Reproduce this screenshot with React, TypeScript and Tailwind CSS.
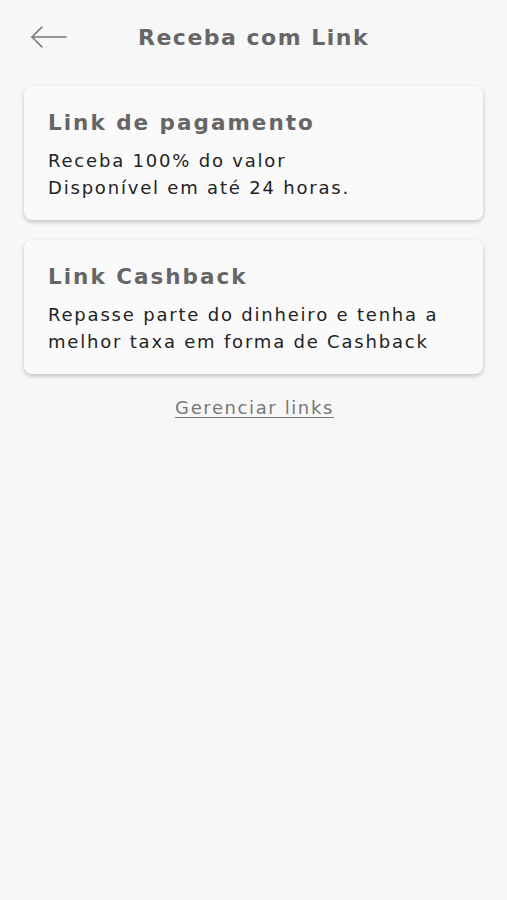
import React from "react";

const cards = [
  {
    title: "Link de pagamento",
    lines: ["Receba 100% do valor", "Disponível em até 24 horas."],
  },
  {
    title: "Link Cashback",
    lines: ["Repasse parte do dinheiro e tenha a", "melhor taxa em forma de Cashback"],
  },
];

const App = () => {
  return (
    <div
      className="min-h-[900px] w-full bg-[#f7f7f7]"
      style={{ fontFamily: '"DejaVu Sans", "Noto Sans", sans-serif' }}
    >
      {/* Header */}
      <header className="flex items-center h-[74px] px-[30px]">
        <button className="w-[38px] h-[24px] flex items-center text-[#777]">
          <svg width="38" height="24" viewBox="0 0 38 24" fill="none" stroke="currentColor" strokeWidth="1.6" strokeLinecap="round" strokeLinejoin="round">
            <path d="M36 12H2" />
            <path d="M12 2L2 12l10 10" />
          </svg>
        </button>
        <h1 className="ml-[70px] text-[22px] font-bold text-[#666] tracking-[1.5px] leading-[30px] pt-[2px]">Receba com Link</h1>
      </header>

      {/* Cards */}
      <main className="px-[24px] pt-[12px] flex flex-col gap-[20px]">
        {cards.map((card) => (
          <div
            key={card.title}
            className="bg-[#fafafa] rounded-[8px] shadow-[0_2px_4px_rgba(0,0,0,0.22)] px-[24px] pt-[22px] pb-[22px] h-[134px]"
          >
            <h2 className="text-[21.5px] font-bold text-[#666] leading-[30px] tracking-[2px]">{card.title}</h2>
            <div className="mt-[9px] text-[18px] text-[#222] leading-[27px] tracking-[1.8px]">
              {card.lines.map((l) => (
                <p key={l}>{l}</p>
              ))}
            </div>
          </div>
        ))}
      </main>

      <div className="flex justify-center mt-[20px] pl-[2px]">
        <a className="text-[18px] text-[#777] tracking-[1.6px] underline underline-offset-[3px]">Gerenciar links</a>
      </div>
    </div>
  );
};

export default App;
